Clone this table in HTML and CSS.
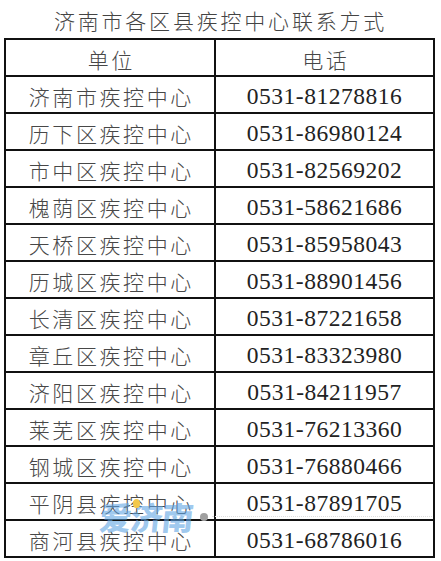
FILE: index.html
```html
<!DOCTYPE html>
<html lang="zh-CN">
<head>
<meta charset="utf-8">
<title>济南市各区县疾控中心联系方式</title>
<link rel="stylesheet" href="styles.css">
</head>
<body>
<div class="page">
  <h1 class="title">济南市各区县疾控中心联系方式</h1>
  <table class="contacts">
    <thead>
      <tr><th class="unit">单位</th><th class="unit">电话</th></tr>
    </thead>
    <tbody>
      <tr><td class="unit">济南市疾控中心</td><td class="tel">0531-81278816</td></tr>
      <tr><td class="unit">历下区疾控中心</td><td class="tel">0531-86980124</td></tr>
      <tr><td class="unit">市中区疾控中心</td><td class="tel">0531-82569202</td></tr>
      <tr><td class="unit">槐荫区疾控中心</td><td class="tel">0531-58621686</td></tr>
      <tr><td class="unit">天桥区疾控中心</td><td class="tel">0531-85958043</td></tr>
      <tr><td class="unit">历城区疾控中心</td><td class="tel">0531-88901456</td></tr>
      <tr><td class="unit">长清区疾控中心</td><td class="tel">0531-87221658</td></tr>
      <tr><td class="unit">章丘区疾控中心</td><td class="tel">0531-83323980</td></tr>
      <tr><td class="unit">济阳区疾控中心</td><td class="tel">0531-84211957</td></tr>
      <tr><td class="unit">莱芜区疾控中心</td><td class="tel">0531-76213360</td></tr>
      <tr><td class="unit">钢城区疾控中心</td><td class="tel">0531-76880466</td></tr>
      <tr><td class="unit">平阴县疾控中心</td><td class="tel">0531-87891705</td></tr>
      <tr><td class="unit">商河县疾控中心</td><td class="tel">0531-68786016</td></tr>
    </tbody>
  </table>
  <div class="watermark">
    <span class="wm-text">爱济南</span>
    <span class="wm-flame"></span>
    <span class="wm-dot"></span>
    <span class="wm-line"></span>
  </div>
</div>
</body>
</html>
```

FILE: styles.css
```css
html, body {
  margin: 0;
  padding: 0;
  background: #ffffff;
}

.page {
  position: relative;
  width: 441px;
  height: 561px;
  overflow: hidden;
  padding: 0 6px 0 4px;
  box-sizing: border-box;
}

.title {
  margin: 0;
  height: 38px;
  display: flex;
  align-items: center;
  justify-content: center;
  padding: 2px 0 0 2px;
  box-sizing: border-box;
  font-family: "Noto Sans CJK SC", sans-serif;
  font-weight: 300;
  font-size: 21px;
  letter-spacing: 2.8px;
  color: #444444;
}

.contacts {
  width: 431px;
  border-collapse: collapse;
  table-layout: fixed;
}

.contacts th,
.contacts td {
  border: 2px solid #111111;
  height: 37px;
  padding: 0;
  text-align: center;
  vertical-align: middle;
  box-sizing: border-box;
}

.contacts tr > :first-child {
  width: 210px;
}

.unit {
  font-family: "Noto Sans CJK SC", sans-serif;
  font-weight: 300;
  font-size: 21px;
  letter-spacing: 2.6px;
  text-indent: 2.6px;
  color: #474747;
  padding-top: 3px !important;
}

.tel {
  font-family: "Liberation Serif", "DejaVu Serif", serif;
  font-weight: 400;
  font-size: 23.5px;
  letter-spacing: 0.5px;
  color: #222222;
  padding-top: 3px !important;
}

.watermark {
  position: absolute;
  left: 100px;
  top: 498px;
  width: 340px;
  height: 40px;
  pointer-events: none;
}

.wm-text {
  position: absolute;
  left: 0;
  top: 0;
  font-family: "Noto Sans CJK SC", sans-serif;
  font-weight: 900;
  font-size: 32px;
  line-height: 36px;
  letter-spacing: -1px;
  color: rgba(95, 165, 228, 0.6);
  transform: skewX(-6deg);
}

.wm-flame {
  position: absolute;
  left: 33px;
  top: 1px;
  width: 7px;
  height: 9px;
  background: #f2c84b;
  border-radius: 50% 50% 45% 45%;
}

.wm-dot {
  position: absolute;
  left: 100px;
  top: 15px;
  width: 8px;
  height: 8px;
  border-radius: 50%;
  background: #a0a0a0;
}

.wm-line {
  position: absolute;
  left: 112px;
  top: 18px;
  width: 220px;
  border-top: 1px dotted #e0e0e0;
}
```
